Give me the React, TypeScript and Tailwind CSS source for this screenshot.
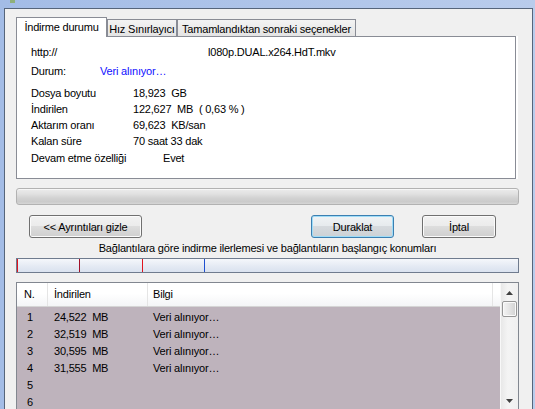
import React from "react";

const rows: [string, string, string][] = [
  ["1", "24,522 MB", "Veri alınıyor…"],
  ["2", "32,519 MB", "Veri alınıyor…"],
  ["3", "30,595 MB", "Veri alınıyor…"],
  ["4", "31,555 MB", "Veri alınıyor…"],
  ["5", "", ""],
  ["6", "", ""],
];

const info: [string, string][] = [
  ["Dosya boyutu", "18,923  GB"],
  ["İndirilen", "122,627  MB  ( 0,63 % )"],
  ["Aktarım oranı", "69,623  KB/san"],
  ["Kalan süre", "70 saat 33 dak"],
];

function Btn({ label, w, def, ml }: { label: string; w: string; def?: boolean; ml: string }) {
  return (
    <div
      className={`${w} ${ml} h-[23px] rounded-[3px] border flex items-center justify-center leading-[14px] ${
        def
          ? "border-[#3c7fb1] shadow-[inset_0_0_0_1px_#9fdcf7] bg-[linear-gradient(#f0f3f5_0%,#e6eaed_50%,#d6dade_50%,#cdd1d5_100%)]"
          : "border-[#707070] shadow-[inset_0_0_0_1px_#fbfbfb] bg-[linear-gradient(#f2f2f2_0%,#ebebeb_50%,#dddddd_50%,#cfcfcf_100%)]"
      }`}
    >
      {label}
    </div>
  );
}

export default function App() {
  return (
    <div className="w-[535px] h-[409px] overflow-hidden flex flex-col whitespace-nowrap bg-[linear-gradient(90deg,#a3bce6,#b9ccec)] font-['Liberation_Sans',Arial,sans-serif] text-[11px] tracking-[-0.2px] text-black">
      <div className="h-[8px] shrink-0 flex">
        <div className="ml-[10px] w-[5px] h-[3px] bg-[#8fb07a]" />
      </div>
      <div className="flex flex-1 min-h-0">
        <div className="w-[4px] shrink-0 bg-[#a3bce6]" />
        <div className="w-[529px] shrink-0 border-l border-t border-r border-[#56657b] bg-[#f0f0f0] flex flex-col">
          {/* tabs */}
          <div className="flex items-end mt-[8px] ml-[11px] -mb-px relative z-10">
            <div className="w-[91px] h-[20px] border-l border-t border-r border-[#898c95] bg-white text-center pt-[1px] leading-[16px]">
              İndirme durumu
            </div>
            <div className="w-[70px] h-[17px] mb-px border-l border-t border-r border-[#898c95] bg-[linear-gradient(#f3f3f3,#e4e4e4)] text-center pt-[2px] leading-[14px]">
              Hız Sınırlayıcı
            </div>
            <div className="w-[179px] h-[17px] mb-px border-l border-t border-r border-[#898c95] bg-[linear-gradient(#f3f3f3,#e4e4e4)] text-center pt-[2px] leading-[14px]">
              Tamamlandıktan sonraki seçenekler
            </div>
          </div>
          {/* panel */}
          <div className="ml-[11px] w-[500px] h-[143px] shrink-0 border border-[#898c95] bg-white shadow-[2px_0_0_#ffffff] pt-[7px] pl-[14px]">
            <div className="flex h-[16px] leading-[16px]">
              <span className="w-[177px] shrink-0">http://</span>
              <span>l080p.DUAL.x264.HdT.mkv</span>
            </div>
            <div className="flex h-[16px] leading-[16px] mt-[3px]">
              <span className="w-[69px] shrink-0">Durum:</span>
              <span className="text-[#1010ff]">Veri alınıyor…</span>
            </div>
            <div className="mt-[6px]">
              {info.map(([k, v]) => (
                <div key={k} className="flex h-[16px] leading-[16px]">
                  <span className="w-[102px] shrink-0">{k}</span>
                  <span className="whitespace-pre">{v}</span>
                </div>
              ))}
              <div className="flex h-[16px] leading-[16px] mt-[1px]">
                <span className="w-[132px] shrink-0">Devam etme özelliği</span>
                <span>Evet</span>
              </div>
            </div>
          </div>
          {/* progress bar */}
          <div className="ml-[11px] mt-[9px] w-[503px] h-[17px] shrink-0 rounded-[3px] border border-[#b2b2b2] bg-[linear-gradient(#ececec_0%,#e0e0e0_35%,#d2d2d2_60%,#cbcbcb_85%,#d6d6d6_100%)] shadow-[inset_0_1px_0_#f6f6f6]" />
          {/* buttons */}
          <div className="flex mt-[10px] shrink-0">
            <Btn label="<< Ayrıntıları gizle" w="w-[113px]" ml="ml-[24px]" />
            <Btn label="Duraklat" w="w-[83px]" ml="ml-[169px]" def />
            <Btn label="İptal" w="w-[74px]" ml="ml-[28px]" />
          </div>
          <div className="ml-[11px] w-[503px] mt-[3px] h-[14px] leading-[14px] text-center shrink-0">
            Bağlantılara göre indirme ilerlemesi ve bağlantıların başlangıç konumları
          </div>
          {/* connections bar */}
          <div className="ml-[11px] mt-[3px] w-[503px] h-[15px] shrink-0 border border-[#6f7b8e] bg-[linear-gradient(#f5f7fb,#e3e9f3_60%,#dae2ef)] flex">
            <div className="w-px h-full bg-[#e0141e]" />
            <div className="w-[61px]" />
            <div className="w-px h-full bg-[#a01028]" />
            <div className="w-[62px]" />
            <div className="w-px h-full bg-[#e0141e]" />
            <div className="w-[61px]" />
            <div className="w-px h-full bg-[#1e50d0]" />
          </div>
          {/* list */}
          <div className="ml-[11px] mt-[9px] w-[503px] flex-1 min-h-0 border-l border-t border-r border-[#828790] flex">
            <div className="w-[483px] flex flex-col">
              <div className="h-[24px] shrink-0 flex border-b border-[#d5d5d5] bg-[linear-gradient(#ffffff_0%,#ffffff_45%,#f4f5f7_100%)] leading-[23px]">
                <div className="w-[31px] pl-[7px] border-r border-[#e5e5e5]">N.</div>
                <div className="w-[100px] pl-[6px] border-r border-[#e5e5e5]">İndirilen</div>
                <div className="w-[345px] pl-[5px] border-r border-[#e5e5e5]">Bilgi</div>
                <div className="flex-1" />
              </div>
              <div className="flex-1 bg-[#beb3bc] pt-[2px]">
                {rows.map(([n, a, b]) => (
                  <div key={n} className="flex h-[17px] leading-[17px]">
                    <div className="w-[31px] pl-[10px]">{n}</div>
                    <div className="w-[100px] pl-[6px] whitespace-pre">{a.replace(" ", "  ")}</div>
                    <div className="pl-[5px]">{b}</div>
                  </div>
                ))}
              </div>
            </div>
            <div className="w-[18px] flex flex-col bg-[linear-gradient(90deg,#e8e8e8,#f4f4f4_40%,#f0f0f0)] border-l border-[#f8f8f8]">
              <div className="h-[18px] flex items-center justify-center pt-[2px]">
                <svg width="7" height="4" viewBox="0 0 7 4">
                  <path d="M0 4 L3.5 0 L7 4 Z" fill="#404040" />
                </svg>
              </div>
              <div className="mx-px h-[16px] rounded-[2px] border border-[#969696] bg-[linear-gradient(90deg,#f4f4f4,#e4e4e4_50%,#d2d2d2)] shadow-[inset_0_0_0_1px_#fafafa]" />
              <div className="flex-1" />
              <div className="h-[17px] flex items-center justify-center">
                <svg width="7" height="4" viewBox="0 0 7 4">
                  <path d="M0 0 L7 0 L3.5 4 Z" fill="#404040" />
                </svg>
              </div>
            </div>
          </div>
        </div>
      </div>
    </div>
  );
}
